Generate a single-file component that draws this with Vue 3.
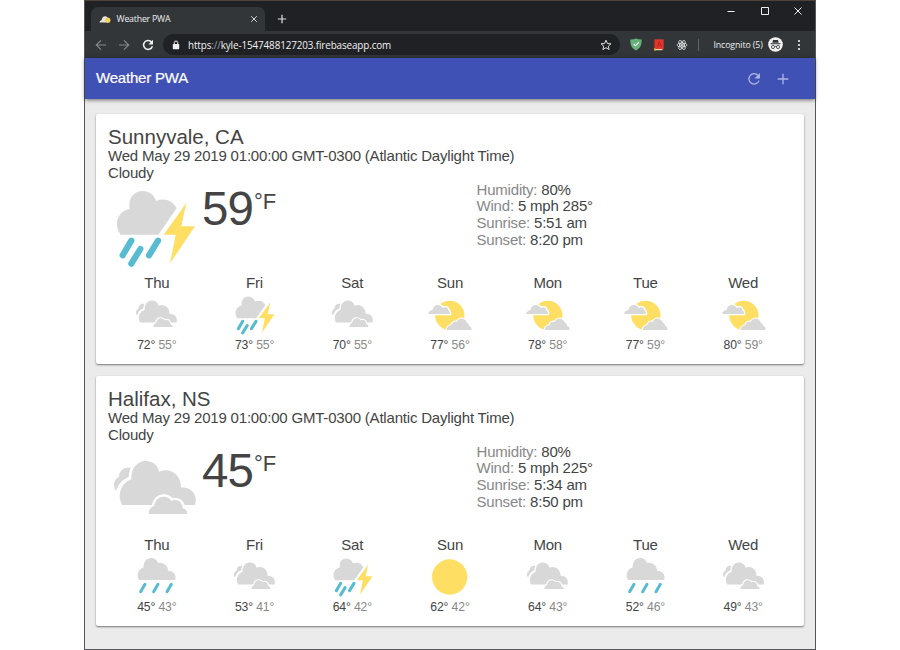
<script setup>
import { h } from 'vue'

const gray = '#d8d8d8'
const yellow = '#ffdf63'
const blue = '#57bcd2'

const shapes = {
  thunder: {
    box: '54 216 282 282',
    parts: [
      ['path', { fill: gray, d: 'M92 374C70 345 82 303 119 297C113 265 132 243 158 243C178 243 193 256 198 273C222 263 248 271 260 295L205 374Z' }],
      ['path', { fill: yellow, d: 'M289 279L221 374H257L240 460L315 349H274Z' }],
      ['path', { fill: 'none', stroke: blue, 'stroke-width': 18.5, 'stroke-linecap': 'round', d: 'M124 392L98 436M151 417L124 461M204 392L177 436' }]
    ]
  },
  cloudy: {
    box: '54 192 282 282',
    parts: [
      ['path', { fill: gray, d: 'M76 330C68 315 73 297 86 292C88 270 104 260 122 264C117 274 117 283 116 291C97 298 84 313 80 330Z' }],
      ['path', { fill: gray, d: 'M97 375C82 350 88 312 124 298C122 265 142 243 167 243C189 243 204 257 207 275C240 260 275 285 273 323C305 320 325 348 315 375Z' }],
      ['path', { fill: gray, stroke: '#fff', 'stroke-width': 14, 'paint-order': 'stroke', 'stroke-linejoin': 'round', d: 'M176 402C176 388 184 380 192 379C196 357 210 349 222 350C233 351 241 356 244 363C260 355 278 365 278 385C288 387 292 394 291 402Z' }]
    ]
  },
  partly: {
    box: '289 66 141 141',
    parts: [
      ['circle', { fill: yellow, cx: 360.5, cy: 136, r: 44 }],
      ['path', { fill: gray, stroke: '#fff', 'stroke-width': 8, 'paint-order': 'stroke', 'stroke-linejoin': 'round', d: 'M295 132C297 124 304 120 309 120C310 108 322 102 332 107C336 109 338 112 340 114C348 109 356 112 355 120C359 122 361 127 361 132Z' }],
      ['path', { fill: gray, stroke: '#fff', 'stroke-width': 6, 'paint-order': 'stroke', 'stroke-linejoin': 'round', d: 'M351 180C351 172 357 166 365 166C366 156 374 153 381 156C386 145 398 143 405 149C409 152 411 155 412 159C416 160 418 163 418 167C423 168 426 174 426 180Z' }]
    ]
  },
  rain: {
    box: '130 72 141 141',
    parts: [
      ['path', { fill: gray, d: 'M148 150C140 138 144 118 162 112C161 95 171 84 184 84C195 84 203 91 205 99C222 95 236 108 235 122C252 122 262 136 256 150Z' }],
      ['path', { fill: 'none', stroke: blue, 'stroke-width': 9, 'stroke-linecap': 'round', d: 'M166 163L153 185M205 163L192 185M245 163L232 185' }]
    ]
  },
  sun: {
    box: '289 72 141 141',
    parts: [['circle', { fill: yellow, cx: 360, cy: 141, r: 53 }]]
  }
}

const WeatherIcon = (props) =>
  h('svg', { viewBox: shapes[props.name].box }, shapes[props.name].parts.map(([tag, attrs]) => h(tag, attrs)))
WeatherIcon.props = ['name']

const date = 'Wed May 29 2019 01:00:00 GMT-0300 (Atlantic Daylight Time)'
const day = (name, icon, high, low) => ({ name, icon, high, low })

const cities = [
  {
    name: 'Sunnyvale, CA', icon: 'thunder', temp: 59,
    details: [['Humidity:', '80%'], ['Wind:', '5 mph 285°'], ['Sunrise:', '5:51 am'], ['Sunset:', '8:20 pm']],
    days: [
      day('Thu', 'cloudy', 72, 55), day('Fri', 'thunder', 73, 55), day('Sat', 'cloudy', 70, 55),
      day('Sun', 'partly', 77, 56), day('Mon', 'partly', 78, 58), day('Tue', 'partly', 77, 59), day('Wed', 'partly', 80, 59)
    ]
  },
  {
    name: 'Halifax, NS', icon: 'cloudy', temp: 45,
    details: [['Humidity:', '80%'], ['Wind:', '5 mph 225°'], ['Sunrise:', '5:34 am'], ['Sunset:', '8:50 pm']],
    days: [
      day('Thu', 'rain', 45, 43), day('Fri', 'cloudy', 53, 41), day('Sat', 'thunder', 64, 42),
      day('Sun', 'sun', 62, 42), day('Mon', 'cloudy', 64, 43), day('Tue', 'rain', 52, 46), day('Wed', 'cloudy', 49, 43)
    ]
  }
]
</script>

<template>
  <div class="desktop">
    <div class="window">
      <div class="tabstrip">
        <div class="tab">
          <svg class="favicon" viewBox="0 0 12 10">
            <path fill="#e3e3e3" d="M.5 8.5C.8 6.6 2 6.4 2.6 6C3 3.4 4.4 2 6.2 2.2C8 2.3 8.6 3.4 8.8 5L7 8.5Z" />
            <circle cx="8.7" cy="6.2" r="2.7" fill="#f3d35d" />
          </svg>
          <span class="tab-title">Weather PWA</span>
          <svg class="tab-close" viewBox="0 0 8 8"><path d="M1.2 1.2L6.8 6.8M6.8 1.2L1.2 6.8" /></svg>
        </div>
        <svg class="new-tab" viewBox="0 0 10 10"><path d="M5 .8V9.2M.8 5H9.2" /></svg>
        <div class="controls">
          <svg viewBox="0 0 10 10"><path d="M1.5 5.5H8.5" /></svg>
          <svg viewBox="0 0 10 10"><path d="M1.5 1.5H8.5V8.5H1.5Z" /></svg>
          <svg viewBox="0 0 10 10"><path d="M1.5 1.5L8.5 8.5M8.5 1.5L1.5 8.5" /></svg>
        </div>
      </div>

      <div class="toolbar">
        <svg class="nav dim" viewBox="0 0 12 12"><path d="M11 6H1.5M6 1.3L1.3 6L6 10.7" /></svg>
        <svg class="nav dim" viewBox="0 0 12 12"><path d="M1 6H10.5M6 1.3L10.7 6L6 10.7" /></svg>
        <svg class="nav reload" viewBox="0 0 12 12">
          <path d="M9.7 3.2A4.5 4.5 0 1 0 10.4 7.2" /><path class="solid" d="M11 .8V5.4H6.4Z" />
        </svg>
        <div class="omnibox">
          <svg class="lock" viewBox="0 0 8 10">
            <path d="M2.3 4.5V2.7A1.7 1.7 0 0 1 5.7 2.7V4.5" fill="none" stroke="#f1f1f1" stroke-width="1" />
            <rect x=".8" y="3.9" width="6.4" height="5.3" rx=".7" fill="#f1f1f1" />
          </svg>
          <span class="url"><span>https</span><span class="faint">://</span><span>kyle-1547488127203.firebaseapp.com</span></span>
          <svg class="star" viewBox="0 0 12 12"><path d="M6 1.2L7.4 4.5L11 4.8L8.3 7.1L9.1 10.6L6 8.7L2.9 10.6L3.7 7.1L1 4.8L4.6 4.5Z" /></svg>
        </div>
        <svg class="shield" viewBox="0 0 12 13">
          <path fill="#67b279" d="M6 .5C7.8 1.4 9.7 1.7 11.7 1.6C11.8 6.8 10.5 10.3 6 12.6C1.5 10.3 .2 6.8 .3 1.6C2.3 1.7 4.2 1.4 6 .5Z" />
          <path d="M3.7 6L5.6 7.8L8.7 4.4" fill="none" stroke="#fff" stroke-width="1.1" />
        </svg>
        <svg class="book" viewBox="0 0 11 12">
          <path fill="#e0372c" d="M1.5 .3H10.7V10.2H1.5Z" />
          <path fill="#a52a22" d="M.7 .6H2V10.2H.7Z" />
          <path fill="#f4d9a4" d="M1.6 10H9.4V11.2H1.6Z" />
          <path fill="#e8b33d" d="M1 9.4H3V11.9L2 11.1L1 11.9Z" />
          <path d="M4.2 7.8L6.4 2.8L8.4 7.8M5 6H7.7" fill="none" stroke="#b3241e" stroke-width=".9" />
        </svg>
        <svg class="react" viewBox="0 0 12 12">
          <circle cx="6" cy="6" r="1.1" fill="#e4e4e4" />
          <g fill="none" stroke="#e4e4e4" stroke-width=".8">
            <ellipse cx="6" cy="6" rx="5.1" ry="2" />
            <ellipse cx="6" cy="6" rx="5.1" ry="2" transform="rotate(60 6 6)" />
            <ellipse cx="6" cy="6" rx="5.1" ry="2" transform="rotate(120 6 6)" />
          </g>
        </svg>
        <i class="divider"></i>
        <span class="incognito">Incognito (5)</span>
        <svg class="avatar" viewBox="0 0 15 15">
          <circle cx="7.5" cy="7.5" r="7.3" fill="#f4f4f4" />
          <path fill="#303235" d="M5 3.1Q5.3 2.6 6 2.9Q7.5 3.3 9 2.9Q9.7 2.6 10 3.1L10.7 5.7H4.3ZM2.5 6.3H12.5V7.2H2.5Z" />
          <g fill="none" stroke="#303235" stroke-width=".8"><circle cx="5" cy="10" r="1.6" /><circle cx="10" cy="10" r="1.6" /><path d="M6.6 9.8Q7.5 9.2 8.4 9.8" /></g>
        </svg>
        <svg class="menu" viewBox="0 0 4 12"><circle cx="2" cy="2" r="1.1" /><circle cx="2" cy="6" r="1.1" /><circle cx="2" cy="10" r="1.1" /></svg>
      </div>

      <header class="app-bar">
        <h1>Weather PWA</h1>
        <svg viewBox="0 0 14 14"><path d="M11 3.4A5.2 5.2 0 1 0 12 8.6" /><path class="solid" d="M12.9 1V6.4H7.5Z" /></svg>
        <svg viewBox="0 0 14 14"><path d="M7 1.7V12.3M1.7 7H12.3" /></svg>
      </header>

      <main>
        <section v-for="city in cities" :key="city.name" class="card">
          <h2>{{ city.name }}</h2>
          <p>{{ date }}</p>
          <p>Cloudy</p>
          <div class="current">
            <WeatherIcon class="big-icon" :name="city.icon" />
            <div class="temperature"><span class="value">{{ city.temp }}</span><span class="scale">°F</span></div>
            <div class="details">
              <div v-for="[label, value] in city.details" :key="label"><span class="label">{{ label }}</span> {{ value }}</div>
            </div>
          </div>
          <div class="forecast">
            <div v-for="d in city.days" :key="d.name" class="day">
              <div class="day-name">{{ d.name }}</div>
              <WeatherIcon class="small-icon" :name="d.icon" />
              <div class="range">{{ d.high }}° <span class="low">{{ d.low }}°</span></div>
            </div>
          </div>
        </section>
      </main>
    </div>
  </div>
</template>

<style>
body {
  background: #fff;
}
</style>

<style scoped>
* {
  box-sizing: border-box;
}
svg {
  display: block;
  flex: none;
}
.desktop {
  height: 650px;
  display: flex;
  justify-content: center;
  overflow: hidden;
  font-family: "Liberation Sans", Arial, sans-serif;
  color: #444;
}
.window {
  width: 732px;
  height: 650px;
  display: flex;
  flex-direction: column;
  background: #ebebeb;
  border: 1px solid #56565a;
  border-top-color: #4d4337;
}
.tabstrip {
  height: 30px;
  flex: none;
  display: flex;
  background: #202124;
  padding-left: 6px;
}
.tab {
  width: 174px;
  height: 24px;
  margin-top: 6px;
  padding: 0 7px 0 8px;
  display: flex;
  align-items: center;
  background: #323639;
  border-radius: 7px 7px 0 0;
}
.favicon {
  width: 12px;
  height: 10px;
}
.tab-title {
  margin-left: 5.5px;
  flex: 1;
  font: 8.8px "Open Sans", sans-serif;
  letter-spacing: -0.22px;
  color: #eee;
  white-space: nowrap;
}
.tab-close {
  width: 8px;
  height: 8px;
  stroke: #d5d5d5;
}
.new-tab {
  width: 10px;
  height: 10px;
  margin: 13px 0 0 11.5px;
  stroke: #e0e0e0;
  stroke-width: 1.2;
}
.controls {
  margin: 5px 12px 0 auto;
  display: flex;
  gap: 23.5px;
}
.controls svg {
  width: 10px;
  height: 10px;
  fill: none;
  stroke: #eee;
}
.toolbar {
  height: 27px;
  flex: none;
  display: flex;
  align-items: center;
  background: #323639;
  padding-left: 10px;
}
.nav {
  width: 12px;
  height: 12px;
  margin-right: 11.3px;
  fill: none;
  stroke: #f1f1f1;
  stroke-width: 1.2;
}
.dim {
  stroke: #85888a;
}
.reload {
  margin-right: 9.4px;
  stroke-width: 1.5;
}
.solid {
  fill: #f1f1f1;
  stroke: none;
}
.omnibox {
  width: 457px;
  height: 21px;
  border-radius: 11px;
  padding: 0 8px 0 9px;
  display: flex;
  align-items: center;
  background: #202124;
}
.lock {
  width: 8px;
  height: 10px;
}
.url {
  flex: 1;
  margin-left: 8px;
  font: 9.9px "Open Sans", sans-serif;
  letter-spacing: -0.12px;
  color: #f1f1f1;
  white-space: nowrap;
}
.faint {
  color: #9aa0a6;
}
.star {
  width: 12px;
  height: 12px;
  fill: none;
  stroke: #ddd;
}
.shield {
  width: 12px;
  height: 13px;
  margin-left: 10px;
}
.book {
  width: 11px;
  height: 12px;
  margin-left: 11.5px;
}
.react {
  width: 12px;
  height: 12px;
  margin-left: 12px;
}
.divider {
  width: 1px;
  height: 12px;
  margin-left: 10px;
  background: #606367;
}
.incognito {
  width: 50px;
  margin-left: 14px;
  font: 8.8px "Open Sans", sans-serif;
  letter-spacing: -0.12px;
  color: #eee;
  white-space: nowrap;
}
.avatar {
  width: 15px;
  height: 15px;
  margin-left: 5px;
}
.menu {
  width: 4px;
  height: 12px;
  margin-left: 14px;
  fill: #eee;
}
.app-bar {
  height: 41px;
  flex: none;
  display: flex;
  align-items: center;
  padding: 0 25px 0 11px;
  background: #3f51b5;
  box-shadow: 0 1px 4px rgba(0, 0, 0, 0.55);
}
h1 {
  flex: 1;
  margin: 0;
  padding-bottom: 2px;
  font-size: 15px;
  letter-spacing: -0.2px;
  font-weight: 400;
  color: #fff;
  -webkit-text-stroke: 0.2px #fff;
}
.app-bar svg {
  width: 14px;
  height: 14px;
  margin-left: 15px;
  fill: none;
  stroke: #b0b7df;
  stroke-width: 1.3;
}
.app-bar .solid {
  fill: #b0b7df;
  stroke: none;
}
main {
  padding: 14.5px 11px 0;
  display: flex;
  flex-direction: column;
  gap: 12px;
}
.card {
  height: 250px;
  padding: 11.5px 12px 0;
  background: #fff;
  border-radius: 2px;
  box-shadow: 0 1px 2px rgba(0, 0, 0, 0.5);
  font-size: 15px;
  letter-spacing: -0.19px;
  line-height: 16.8px;
}
h2 {
  margin: 0;
  font-size: 20.5px;
  line-height: 23px;
  letter-spacing: 0;
  font-weight: 400;
}
p {
  margin: 0;
}
.current {
  height: 93px;
  display: flex;
}
.big-icon {
  width: 94px;
  height: 94px;
}
.temperature {
  width: 274.5px;
  display: flex;
  letter-spacing: 0;
}
.value {
  width: 52px;
  font-size: 47.5px;
  letter-spacing: -0.8px;
  line-height: 54px;
}
.scale {
  font-size: 22px;
  line-height: 25px;
  margin-top: 7px;
}
.label {
  color: #888;
}
.forecast {
  display: grid;
  grid-template-columns: repeat(7, 1fr);
}
.day {
  display: flex;
  flex-direction: column;
  align-items: center;
}
.small-icon {
  width: 47px;
  height: 47px;
  margin: 0.8px 0 -0.8px;
}
.range {
  font-size: 12.2px;
  letter-spacing: -0.14px;
  line-height: 14px;
  white-space: nowrap;
}
.low {
  color: #888;
}
</style>
